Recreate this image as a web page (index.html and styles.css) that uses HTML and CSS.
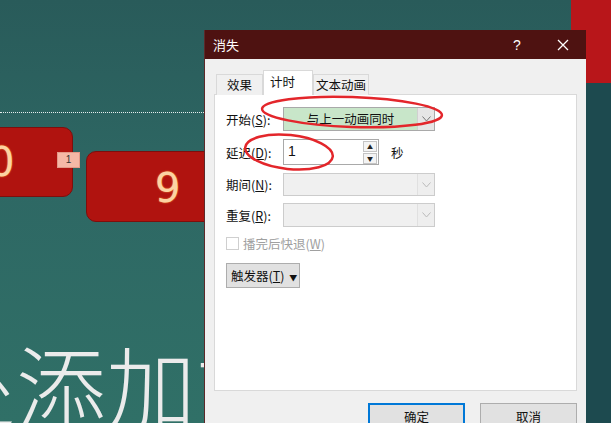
FILE: index.html
```html
<!DOCTYPE html>
<html lang="zh-CN">
<head>
  <meta charset="UTF-8">
  <title>消失</title>
  <link rel="stylesheet" href="styles.css">
</head>
<body>

  <div class="stage">
    <!-- слайд -->
    <div class="slide">
      <div class="guide"></div>
      <div class="card card-a"><span class="digit">0</span></div>
      <div class="badge">1</div>
      <div class="card card-b"><span class="digit">9</span></div>
      <div class="corner"></div>
      <div class="edge"></div>
      <div class="placeholder">处添加文</div>
    </div>

    <!-- диалог -->
    <div class="dialog">
      <div class="titlebar">
        <span class="title">消失</span>
        <span class="tb-btn">?</span>
        <span class="tb-btn">
          <svg width="12" height="12" viewBox="0 0 12 12"><path d="M1 1L11 11M11 1L1 11" stroke="#fff" stroke-width="1.3"/></svg>
        </span>
      </div>

      <div class="body">
        <div class="tabs">
          <div class="tab">效果</div>
          <div class="tab active">计时</div>
          <div class="tab">文本动画</div>
        </div>

        <div class="panel">
          <div class="row row-start">
            <label>开始(<u>S</u>):</label>
            <div class="combo green">
              <span class="combo-text">与上一动画同时</span>
              <span class="drop"><svg width="9" height="6" viewBox="0 0 9 6"><path d="M0.5 0.5L4.5 5L8.5 0.5" fill="none" stroke="#777"/></svg></span>
            </div>
          </div>

          <div class="row row-delay">
            <label>延迟(<u>D</u>):</label>
            <div class="spin green">
              <span class="spin-text">1</span>
              <span class="spin-btns">
                <span class="sb">&#9650;</span>
                <span class="sb">&#9660;</span>
              </span>
            </div>
            <span class="unit">秒</span>
          </div>

          <div class="row row-period">
            <label>期间(<u>N</u>):</label>
            <div class="combo disabled">
              <span class="combo-text"></span>
              <span class="drop"><svg width="9" height="6" viewBox="0 0 9 6"><path d="M0.5 0.5L4.5 5L8.5 0.5" fill="none" stroke="#bbb"/></svg></span>
            </div>
          </div>

          <div class="row row-repeat">
            <label>重复(<u>R</u>):</label>
            <div class="combo disabled">
              <span class="combo-text"></span>
              <span class="drop"><svg width="9" height="6" viewBox="0 0 9 6"><path d="M0.5 0.5L4.5 5L8.5 0.5" fill="none" stroke="#bbb"/></svg></span>
            </div>
          </div>

          <div class="check">
            <span class="box"></span>
            <span>播完后快退(<u>W</u>)</span>
          </div>

          <button class="trigger">触发器(<u>T</u>) <span class="tri">&#9660;</span></button>
        </div>

        <div class="actions">
          <button class="btn primary">确定</button>
          <button class="btn">取消</button>
        </div>
      </div>
    </div>

    <!-- пометки -->
    <svg class="marks" width="611" height="423" viewBox="0 0 611 423">
      <ellipse cx="352" cy="112" rx="90" ry="15" transform="rotate(2 352 112)" fill="none" stroke="#e3262b" stroke-width="2.5"/>
      <ellipse cx="289" cy="152" rx="44" ry="17" transform="rotate(6 289 152)" fill="none" stroke="#e3262b" stroke-width="2.5"/>
    </svg>
  </div>

</body>
</html>
```

FILE: styles.css
```css
body {
  margin: 0;
  padding: 0;
  font-family: "Noto Sans CJK SC", "Noto Sans", sans-serif;
  background-color: #2d6763;
}

.stage {
  position: relative;
  width: 611px;
  height: 423px;
  overflow: hidden;
}

.slide {
  position: absolute;
  left: 0;
  top: 0;
  width: 611px;
  height: 423px;
  background: linear-gradient(180deg, #295b5a 0%, #2e6864 45%, #307067 100%);
}

.guide {
  position: absolute;
  left: 0;
  top: 112px;
  width: 210px;
  border-top: 1px dotted #e6eeee;
}

.card {
  position: absolute;
  background-color: #b0130f;
  border: 1px solid #7e0e0c;
  border-radius: 10px;
  overflow: hidden;
}

.card-a {
  left: -12px;
  top: 127px;
  width: 83px;
  height: 68px;
}

.card-b {
  left: 86px;
  top: 151px;
  width: 150px;
  height: 69px;
}

.digit {
  position: absolute;
  font-family: "DejaVu Sans", sans-serif;
  font-size: 40px;
  line-height: 40px;
  color: #fbd3a3;
  text-shadow: 0 0 2px #e97b36, 0 0 1px #e97b36;
}

.card-a .digit {
  left: 0;
  top: 14px;
}

.card-b .digit {
  left: 68px;
  top: 16px;
}

.badge {
  position: absolute;
  left: 57px;
  top: 152px;
  width: 21px;
  height: 14px;
  background-color: #f5b8a6;
  border: 1px solid #e39a88;
  font-family: "Liberation Sans", sans-serif;
  font-size: 10px;
  line-height: 14px;
  text-align: center;
  color: #333;
}

.corner {
  position: absolute;
  left: 571px;
  top: 0;
  width: 40px;
  height: 83px;
  background-color: #b8161a;
}

.edge {
  position: absolute;
  left: 586px;
  top: 83px;
  width: 25px;
  height: 340px;
  background-color: #1d4a4f;
}

.placeholder {
  position: absolute;
  left: -74px;
  top: 338px;
  font-size: 90px;
  line-height: 90px;
  font-weight: 300;
  color: #ebebeb;
  white-space: nowrap;
}

/* dialog */

.dialog {
  position: absolute;
  left: 204px;
  top: 30px;
  width: 382px;
  height: 420px;
  background-color: #f0f0f0;
  box-sizing: border-box;
  border-left: 1px solid #5c2a2a;
}

.titlebar {
  display: flex;
  align-items: center;
  height: 29px;
  background-color: #4e1211;
  color: #fff;
}

.title {
  flex: 1;
  padding-left: 8px;
  font-size: 13px;
}

.tb-btn {
  width: 46px;
  display: flex;
  justify-content: center;
  font-family: "Liberation Sans", sans-serif;
  font-size: 14px;
}

.body {
  padding: 11px 9px 0 9px;
}

.tabs {
  display: flex;
  align-items: flex-end;
  height: 25px;
  padding-left: 2px;
  margin-bottom: -1px;
  position: relative;
  z-index: 1;
}

.tab {
  height: 21px;
  box-sizing: border-box;
  border: 1px solid #d9d9d9;
  border-bottom: none;
  background-color: #f0f0f0;
  font-size: 12.5px;
  line-height: 20px;
  color: #111;
  text-align: center;
  white-space: nowrap;
}

.tab:first-child {
  width: 47px;
}

.tab.active {
  height: 25px;
  width: 50px;
  background-color: #fff;
  line-height: 22px;
  text-align: left;
  padding-left: 6px;
}

.tab:last-child {
  width: 56px;
}

.panel {
  height: 297px;
  box-sizing: border-box;
  border: 1px solid #d9d9d9;
  background-color: #fff;
  padding: 12px 0 0 11px;
}

.row {
  display: flex;
  align-items: center;
}

.row label {
  width: 57px;
  font-size: 12.5px;
  color: #111;
}

.row-delay { margin-top: 8px; }
.row-period { margin-top: 8px; }
.row-repeat { margin-top: 7px; }

.combo {
  display: flex;
  width: 152px;
  height: 24px;
  box-sizing: border-box;
  border: 1px solid #adadad;
}

.combo.green {
  background-color: #c8e6c9;
  border-color: #a9a9a9;
}

.combo.disabled {
  height: 23px;
  background-color: #f0f0f0;
  border-color: #cccccc;
}

.row-repeat .combo.disabled {
  height: 24px;
}

.combo-text {
  flex: 1;
  text-align: center;
  font-size: 12.5px;
  line-height: 22px;
  color: #111;
  white-space: nowrap;
}

.drop {
  width: 16px;
  display: flex;
  align-items: center;
  justify-content: center;
  background-color: #e6e6e6;
  border-left: 1px solid #d0d0d0;
}

.disabled .drop {
  background-color: #eeeeee;
  border-left-color: #e0e0e0;
}

.spin {
  display: flex;
  width: 96px;
  height: 26px;
  box-sizing: border-box;
  border: 1px solid #a9a9a9;
}

.spin-text {
  flex: 1;
  padding-left: 4px;
  font-family: "Liberation Sans", sans-serif;
  font-size: 14px;
  line-height: 23px;
  color: #111;
}

.spin-btns {
  display: flex;
  flex-direction: column;
  width: 14px;
  margin: 1px 1px 1px 0;
  gap: 1px;
}

.sb {
  flex: 1;
  background-color: #f4f4f4;
  border: 1px solid #c4c4c4;
  font-size: 6px;
  line-height: 9px;
  text-align: center;
  color: #222;
}

.unit {
  margin-left: 12px;
  font-size: 12.5px;
  color: #111;
}

.check {
  display: flex;
  align-items: center;
  gap: 4px;
  margin-top: 8px;
  height: 17px;
  font-size: 12.5px;
  color: #a0a0a0;
}

.box {
  width: 11px;
  height: 11px;
  border: 1px solid #cfcfcf;
  background-color: #fff;
}

.trigger {
  display: block;
  margin-top: 11px;
  width: 74px;
  height: 25px;
  padding: 0 0 0 4px;
  text-align: left;
  background-color: #e1e1e1;
  border: 1px solid #adadad;
  font-family: "Noto Sans CJK SC", sans-serif;
  font-size: 12.5px;
  color: #111;
  white-space: nowrap;
}

.tri {
  font-size: 8px;
  margin-left: 2px;
}

.actions {
  display: flex;
  justify-content: flex-end;
  gap: 15px;
  margin-top: 12px;
}

.btn {
  width: 97px;
  height: 26px;
  background-color: #e1e1e1;
  border: 1px solid #adadad;
  font-family: "Noto Sans CJK SC", sans-serif;
  font-size: 12.5px;
  color: #111;
}

.btn.primary {
  border: 2px solid #0078d7;
}

.marks {
  position: absolute;
  left: 0;
  top: 0;
  pointer-events: none;
}
```
